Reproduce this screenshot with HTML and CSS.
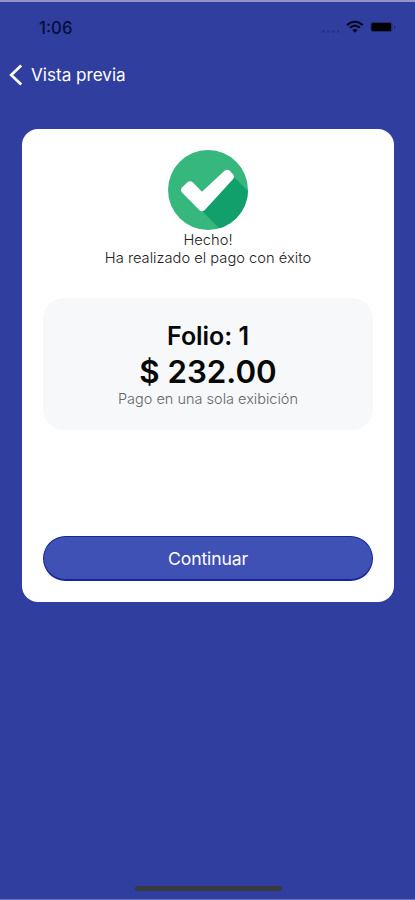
FILE: index.html
```html
<!DOCTYPE html>
<html lang="es">
<head>
<meta charset="utf-8">
<title>Vista previa</title>
<link rel="stylesheet" href="styles.css">
</head>
<body>
<div class="screen">
  <header class="status">
    <span class="time">1:06</span>
    <svg class="indicators" width="76" height="18" viewBox="0 0 76 18">
      <path d="M2 13.5h17" stroke="#18236f" stroke-width="2" stroke-dasharray="3 2" opacity=".5"/>
      <g fill="none" stroke="#050820" stroke-width="2.1">
        <path d="M27 7.1Q34.9 .3 42.8 7.1"/>
        <path d="M29.8 9.8Q34.9 5.3 40 9.8"/>
      </g>
      <path d="M32.2 12Q34.9 9.8 37.6 12L34.9 14.8Z" fill="#050820"/>
      <rect x="50.5" y="4" width="22" height="10" rx="3" fill="#202b75"/>
      <rect x="51.5" y="5" width="19.5" height="8" rx="1.5" fill="#000"/>
      <path d="M74 7.2q3 1.8 0 3.6z" fill="#1d276c"/>
    </svg>
  </header>
  <nav class="nav">
    <svg class="chevron" width="14" height="22" viewBox="0 0 14 22"><path d="M12.2 1.6 2.2 11 12.2 20.4" fill="none" stroke="#fff" stroke-width="2.7"/></svg>
    <span class="back">Vista previa</span>
  </nav>
  <main class="card">
    <svg class="check" width="80" height="80" viewBox="0 0 80 80">
      <defs><clipPath id="disc"><circle cx="40" cy="40" r="40"/></clipPath></defs>
      <circle cx="40" cy="40" r="40" fill="#35b77d"/>
      <path d="M33 60 65 26 100 61 75 100 54 81Z" fill="#119f6b" clip-path="url(#disc)"/>
      <path d="M14.2 37.2 19.4 32.2Q22.2 30 25 32.4L34 41.8 56.5 20.8Q59.3 18.4 62 21L65.2 24.4Q67 26.8 64.7 29.5L36.8 60Q34 62.6 31.3 60L14 42.6Q11.8 39.8 14.2 37.2Z" fill="#fff"/>
    </svg>
    <p class="done">Hecho!</p>
    <p class="message">Ha realizado el pago con éxito</p>
    <section class="receipt">
      <h2 class="folio">Folio: 1</h2>
      <p class="amount">$ 232.00</p>
      <p class="note">Pago en una sola exibición</p>
    </section>
    <button class="continue" type="button">Continuar</button>
  </main>
  <div class="home"></div>
</div>
</body>
</html>
```
FILE: styles.css
```css
* { box-sizing: border-box; }
body { margin: 0; font-family: Inter, sans-serif; background: #303f9f; }
p, h2 { margin: 0; white-space: nowrap; }
.screen {
  height: 900px;
  display: flex;
  flex-direction: column;
  background: #303f9f;
  border-top: 2px solid #9693c8;
  border-bottom: 1px solid #6974bd;
  overflow: hidden;
}
.status {
  height: 50px;
  padding: 0 19px 0 39px;
  display: flex;
  align-items: center;
  justify-content: space-between;
  flex: none;
}
.time { font-size: 16.8px; font-weight: 500; color: #080d38; line-height: 20px; padding-top: 1px; }
.indicators { display: block; }
.nav {
  height: 46px;
  padding-left: 9px;
  display: flex;
  align-items: center;
  gap: 8px;
  color: #fff;
  flex: none;
}
.back { font-size: 17.1px; line-height: 22px; }
.card {
  margin: 31px 21px 0 22px;
  height: 473px;
  padding: 21px 21px 21px;
  background: #fff;
  border-radius: 16px;
  display: flex;
  flex-direction: column;
  align-items: center;
  flex: none;
}
.check { display: block; flex: none; }
.done, .message { font-size: 14.7px; line-height: 18px; font-weight: 300; color: #222; }
.done { padding-top: 1px; }
.receipt {
  width: 330px;
  height: 132px;
  margin-top: 31px;
  padding-top: 21px;
  background: #f6f8fa;
  border-radius: 21px;
  text-align: center;
}
.folio { font-size: 25px; line-height: 34px; font-weight: 600; color: #080808; letter-spacing: -0.05px; }
.amount { font-size: 31.3px; line-height: 36px; font-weight: 600; color: #080808; padding-top: 1px; }
.note { font-size: 14.5px; line-height: 20px; font-weight: 300; color: #666; margin-top: -1px; }
.continue {
  width: 330px;
  height: 45px;
  margin-top: auto;
  padding: 2px 0 0;
  border: 1px solid #16269a;
  border-bottom-width: 2px;
  border-radius: 23px;
  background: #3f51b5;
  color: #fff;
  font: 400 17.6px/24px Inter, sans-serif;
  letter-spacing: -0.15px;
}
.home { width: 147px; height: 5px; margin: auto auto 8px 135px; border-radius: 3px; background: #393a3e; }
```
